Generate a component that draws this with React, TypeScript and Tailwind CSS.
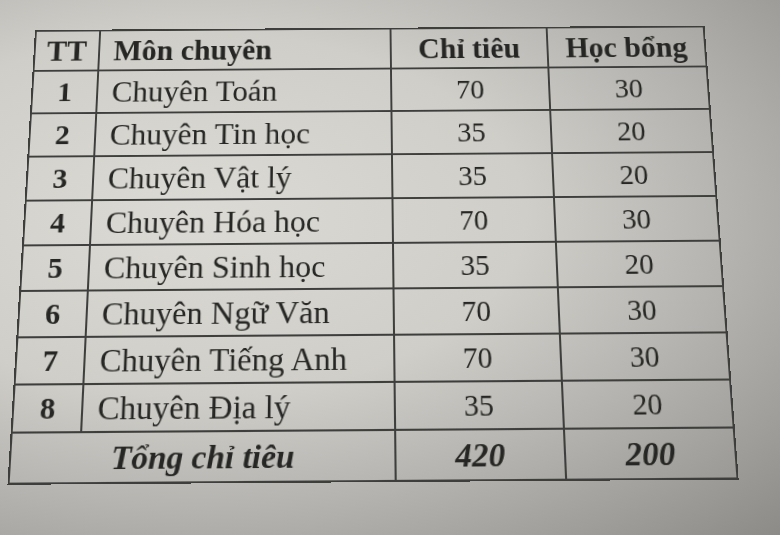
const rows = [
  { tt: '1', mon: 'Chuyên Toán', chi: '70', hoc: '30' },
  { tt: '2', mon: 'Chuyên Tin học', chi: '35', hoc: '20' },
  { tt: '3', mon: 'Chuyên Vật lý', chi: '35', hoc: '20' },
  { tt: '4', mon: 'Chuyên Hóa học', chi: '70', hoc: '30' },
  { tt: '5', mon: 'Chuyên Sinh học', chi: '35', hoc: '20' },
  { tt: '6', mon: 'Chuyên Ngữ Văn', chi: '70', hoc: '30' },
  { tt: '7', mon: 'Chuyên Tiếng Anh', chi: '70', hoc: '30' },
  { tt: '8', mon: 'Chuyên Địa lý', chi: '35', hoc: '20' },
]

export default function App() {
  return (
    <div className="h-[535px] w-full overflow-hidden bg-[radial-gradient(ellipse_at_25%_40%,#dbdad5_0%,#cfcec9_40%,#b4b3af_65%,#8c8b88_100%)] font-['Liberation_Serif',serif] text-[#262624]">
      {/* paper photo: slight perspective */}
      <div className="ml-[22px] mt-[14px] w-[697px] [transform:perspective(1000px)_rotateX(11deg)_rotateZ(-0.4deg)]">
        <table className="w-[697px] table-fixed border-collapse border-2 border-[#3e3e3c] text-[31px] leading-none">
          <colgroup>
            <col className="w-[67px]" />
            <col className="w-[303px]" />
            <col className="w-[163px]" />
            <col className="w-[164px]" />
          </colgroup>
          <thead>
            <tr className="h-[44px] font-bold">
              <th className="border-2 border-[#3e3e3c] text-center">TT</th>
              <th className="border-2 border-[#3e3e3c] px-3.5 text-left">Môn chuyên</th>
              <th className="border-2 border-[#3e3e3c] text-center">Chỉ tiêu</th>
              <th className="border-2 border-[#3e3e3c] text-center">Học bổng</th>
            </tr>
          </thead>
          <tbody>
            {rows.map((r) => (
              <tr key={r.tt} className="h-[46px]">
                <td className="border-2 border-[#3e3e3c] text-center text-[30px] font-bold">{r.tt}</td>
                <td className="border-2 border-[#3e3e3c] px-3.5 text-[32px] whitespace-nowrap">{r.mon}</td>
                <td className="border-2 border-[#3e3e3c] text-center text-[29px]">{r.chi}</td>
                <td className="border-2 border-[#3e3e3c] text-center text-[29px]">{r.hoc}</td>
              </tr>
            ))}
            <tr className="h-[48px] font-bold italic">
              <td colSpan={2} className="border-2 border-[#3e3e3c] text-center text-[32px]">Tổng chỉ tiêu</td>
              <td className="border-2 border-[#3e3e3c] text-center text-[32px]">420</td>
              <td className="border-2 border-[#3e3e3c] text-center text-[32px]">200</td>
            </tr>
          </tbody>
        </table>
      </div>
    </div>
  )
}
